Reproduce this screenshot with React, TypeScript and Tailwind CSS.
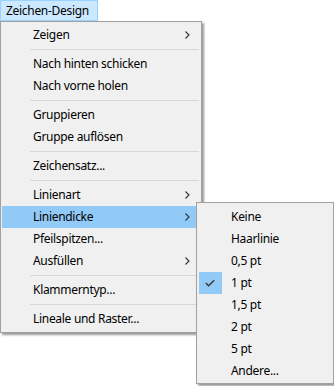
import type { ReactNode } from 'react'

type Entry =
  | { kind: 'item'; label: string; sub?: boolean; active?: boolean }
  | { kind: 'sep' }

const mainItems: Entry[] = [
  { kind: 'item', label: 'Zeigen', sub: true },
  { kind: 'sep' },
  { kind: 'item', label: 'Nach hinten schicken' },
  { kind: 'item', label: 'Nach vorne holen' },
  { kind: 'sep' },
  { kind: 'item', label: 'Gruppieren' },
  { kind: 'item', label: 'Gruppe auflösen' },
  { kind: 'sep' },
  { kind: 'item', label: 'Zeichensatz...' },
  { kind: 'sep' },
  { kind: 'item', label: 'Linienart', sub: true },
  { kind: 'item', label: 'Liniendicke', sub: true, active: true },
  { kind: 'item', label: 'Pfeilspitzen...' },
  { kind: 'item', label: 'Ausfüllen', sub: true },
  { kind: 'sep' },
  { kind: 'item', label: 'Klammerntyp...' },
  { kind: 'sep' },
  { kind: 'item', label: 'Lineale und Raster...' },
]

const thickness = ['Keine', 'Haarlinie', '0,5 pt', '1 pt', '1,5 pt', '2 pt', '5 pt', 'Andere...']

function Chevron() {
  return (
    <svg width="5" height="8" viewBox="0 0 5 8" className="shrink-0">
      <polyline points="0.5,0.5 4,4 0.5,7.5" fill="none" stroke="#333" strokeWidth="1.1" />
    </svg>
  )
}

function Check() {
  return (
    <svg width="10" height="8" viewBox="0 0 10 8">
      <polyline points="0.8,4 3.6,6.8 9.2,1.2" fill="none" stroke="#333" strokeWidth="1.3" />
    </svg>
  )
}

function MenuRow({ children, active }: { children: ReactNode; active?: boolean }) {
  return (
    <div className={`flex h-[22px] items-center ${active ? 'bg-[#91c9f7]' : ''}`}>{children}</div>
  )
}

export default function App() {
  return (
    <div
      className="relative h-[386px] w-[334px] overflow-hidden bg-white text-[12px] tracking-[-0.3px] text-black"
      style={{ fontFamily: '"Segoe UI", "Noto Sans", sans-serif' }}
    >
      {/* Menüleiste */}
      <div className="flex h-[21px] w-[98px] items-center border border-[#99d1ff] bg-[#cce8ff] pl-[5px]">
        Zeichen-Design
      </div>

      {/* Hauptmenü */}
      <div className="w-[202px] border border-[#a0a0a0] bg-[#f0f0f0] px-[1px] pb-[2px] pt-[2px] shadow-[2px_2px_2px_rgba(0,0,0,0.4)]">
        {mainItems.map((e, i) =>
          e.kind === 'sep' ? (
            <div key={i} className="flex h-[7px] items-center pl-[28px] pr-[1px]">
              <div className="h-px w-full bg-[#d7d7d7]" />
            </div>
          ) : (
            <MenuRow key={i} active={e.active}>
              <span className="flex-1 pl-[31px]">{e.label}</span>
              {e.sub && (
                <span className="pr-[10px]">
                  <Chevron />
                </span>
              )}
            </MenuRow>
          ),
        )}
      </div>

      {/* Untermenü Liniendicke */}
      <div className="absolute left-[196px] top-[202px] w-[138px] border border-[#a0a0a0] bg-[#f0f0f0] pb-[1px] pl-[1px] pt-[3px] shadow-[2px_2px_2px_rgba(0,0,0,0.4)]">
        {thickness.map((t) => (
          <MenuRow key={t}>
            <span className="flex h-[22px] w-[24px] items-center justify-center">
              {t === '1 pt' && (
                <span className="flex h-[22px] w-[23px] items-center justify-center bg-[#91c9f7]">
                  <Check />
                </span>
              )}
            </span>
            <span className="pl-[9px]">{t}</span>
          </MenuRow>
        ))}
      </div>
    </div>
  )
}
